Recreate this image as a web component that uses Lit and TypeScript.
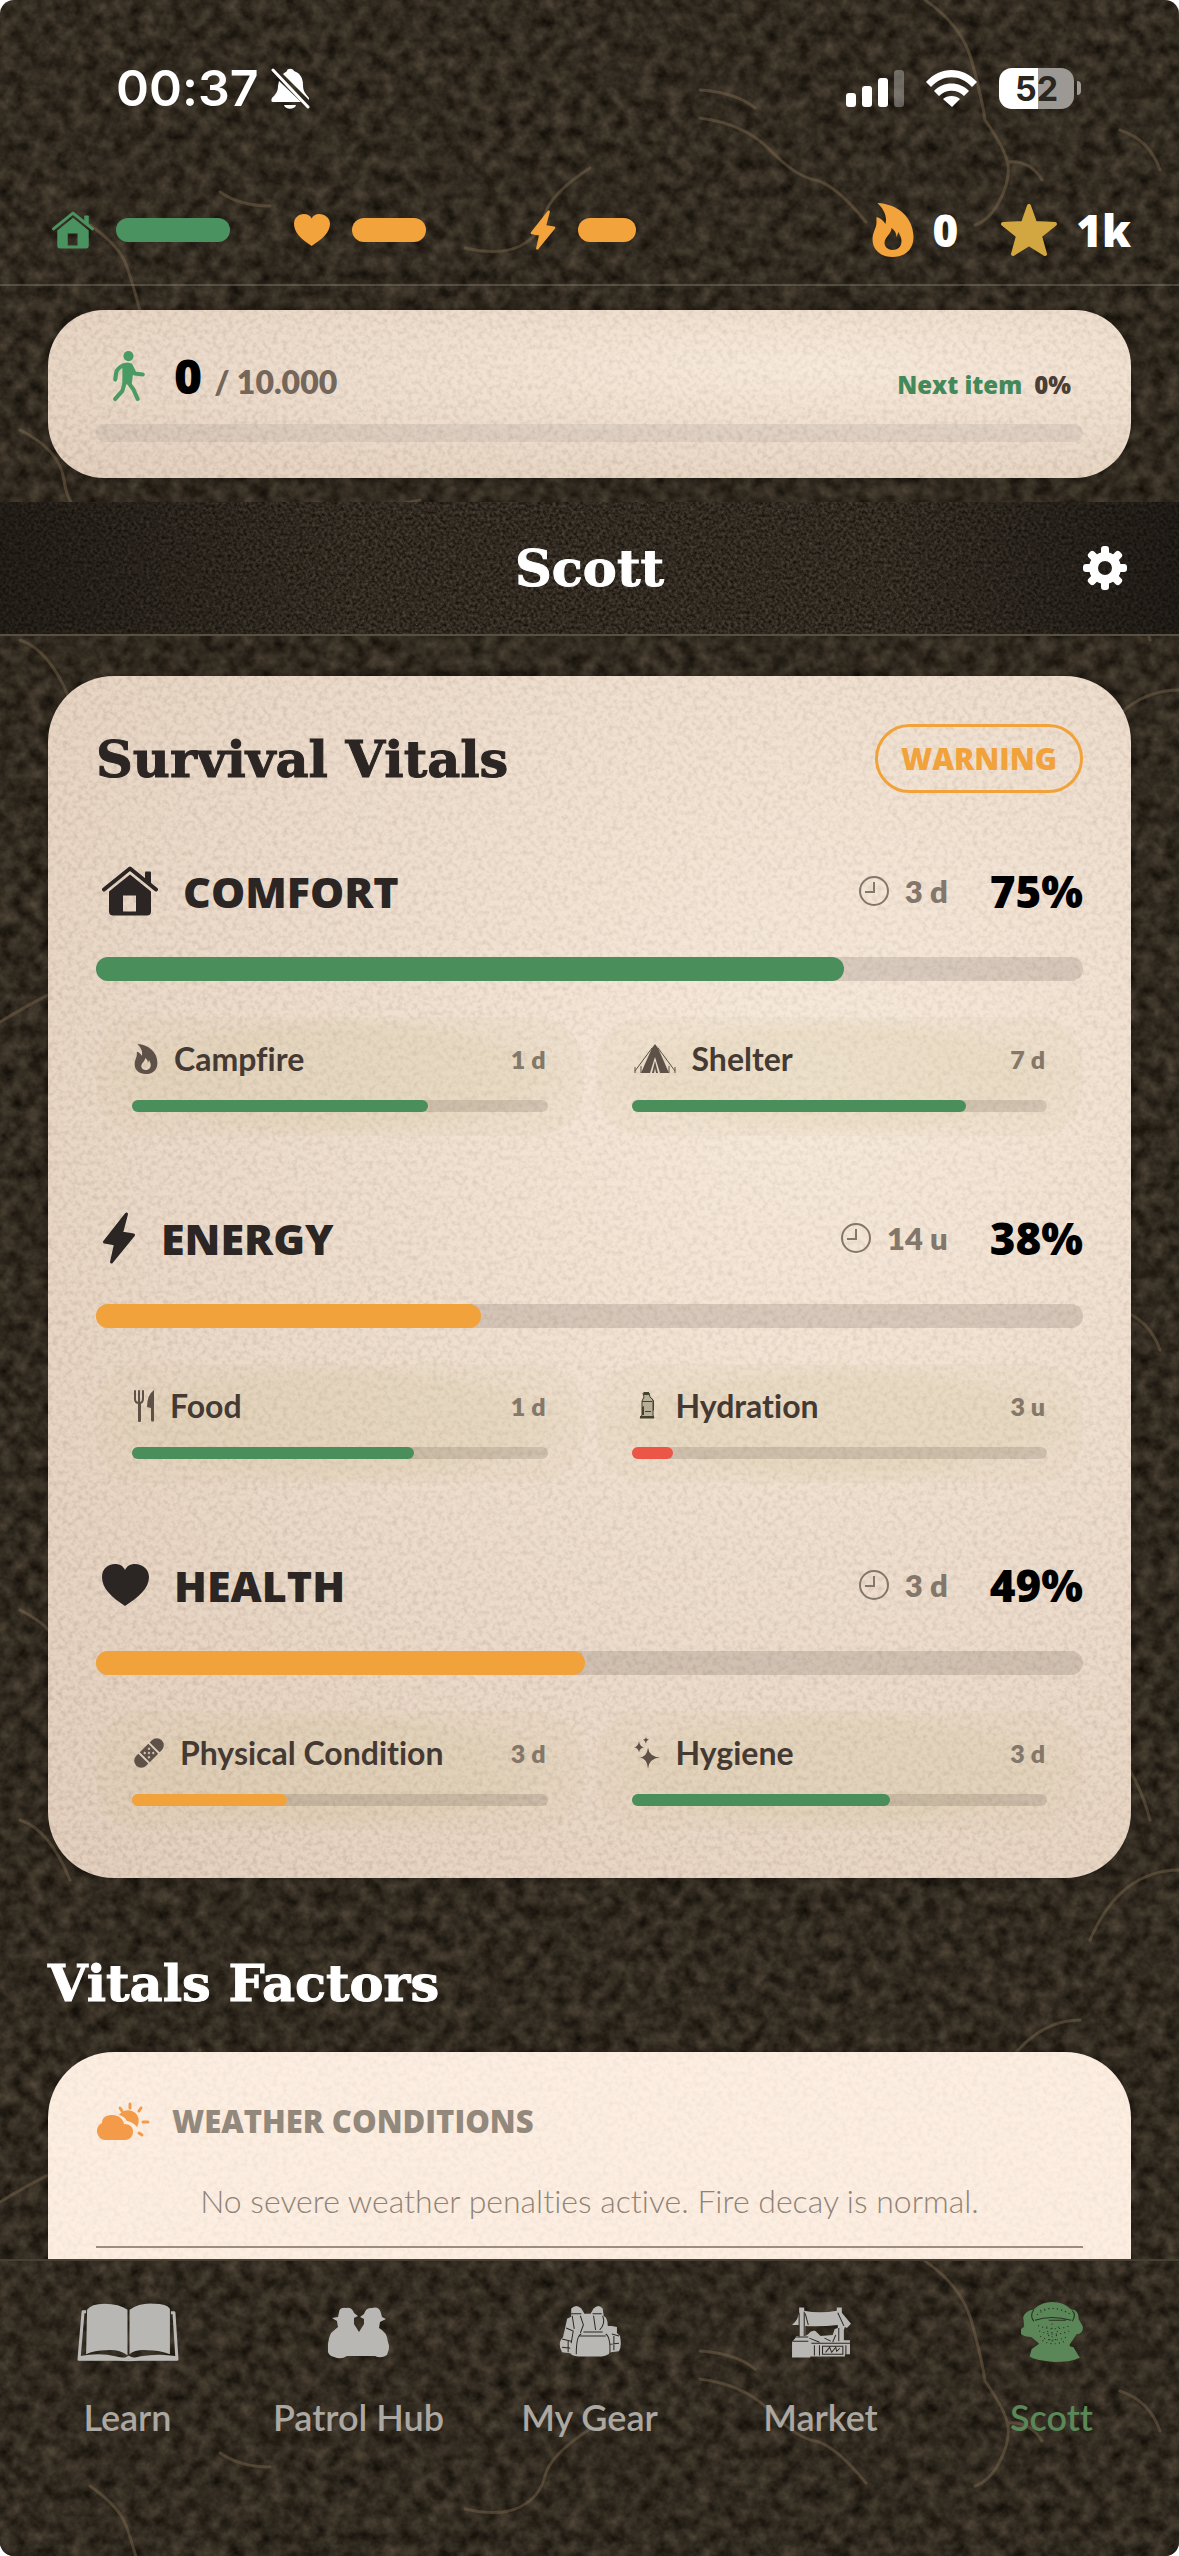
import { css, html, LitElement, svg, SVGTemplateResult, unsafeCSS } from "lit";
import { customElement, property } from "lit/decorators.js";

type Tone = "good" | "warn" | "bad";

interface SubVital {
  icon: string;
  label: string;
  time: string;
  value: number;
  tone: Tone;
}

interface Vital {
  icon: string;
  label: string;
  time: string;
  percent: number;
  fill: number;
  tone: Tone;
  parts: SubVital[];
}

interface IconShape {
  width: number;
  height: number;
  body: SVGTemplateResult;
}

const VITALS: Vital[] = [
  {
    icon: "house", label: "COMFORT", time: "3 d", percent: 75, fill: 75.8, tone: "good",
    parts: [
      { icon: "flame-small", label: "Campfire", time: "1 d", value: 71.3, tone: "good" },
      { icon: "tent", label: "Shelter", time: "7 d", value: 80.4, tone: "good" },
    ],
  },
  {
    icon: "bolt", label: "ENERGY", time: "14 u", percent: 38, fill: 39, tone: "warn",
    parts: [
      { icon: "food", label: "Food", time: "1 d", value: 67.9, tone: "good" },
      { icon: "bottle", label: "Hydration", time: "3 u", value: 10.1, tone: "bad" },
    ],
  },
  {
    icon: "heart", label: "HEALTH", time: "3 d", percent: 49, fill: 49.5, tone: "warn",
    parts: [
      { icon: "bandage", label: "Physical Condition", time: "3 d", value: 37.2, tone: "warn" },
      { icon: "sparkles", label: "Hygiene", time: "3 d", value: 62.1, tone: "good" },
    ],
  },
];

const TABS = [
  { icon: "book", label: "Learn" },
  { icon: "scouts", label: "Patrol Hub" },
  { icon: "backpack", label: "My Gear" },
  { icon: "market", label: "Market" },
  { icon: "face", label: "Scott", active: true },
];

const HOUSE = svg`
  <path d="M2 23 28 2 54 23" fill="none" stroke="currentColor" stroke-width="4" stroke-linecap="round" stroke-linejoin="round"/>
  <path d="M43 6q0-1 1-1h4q1 0 1 1v12l-6-5Z"/>
  <path fill-rule="evenodd" d="M28 8 49 25V45q0 4-4 4H11q-4 0-4-4V25ZM21 29V45H34V29Z"/>`;

const HEART = svg`<path d="M23 42C9 33 0 24 0 13 0 5 6 0 13 0c5 0 8 2 10 6 2-4 5-6 10-6 7 0 14 5 14 13C47 24 37 33 23 42Z"/>`;

const BOLT = svg`<path stroke="currentColor" stroke-width="3" stroke-linejoin="round" d="M24 2 2 30 13 32 9 50 31 23 19 21Z"/>`;

const FLAME = svg`<path fill-rule="evenodd" d="M5 0C26 1 41 15 41 34 41 47 32 54 20 54S0 47 0 36c0-7 4-11 4-17l0-5c4 1 7 4 9 7C15 13 11 6 5 0ZM19 25c0 6-7 9-7 15 0 4 4 7 8 7 5 0 9-3 9-9 0-4-2-6-3-9l-2 5C24 30 22 27 19 25Z"/>`;

const TEETH = [0, 45, 90, 135, 180, 225, 270, 315];

const ICONS: Record<string, IconShape> = {
  house: { width: 56, height: 49, body: HOUSE },
  heart: { width: 47, height: 42, body: HEART },
  bolt: { width: 33, height: 52, body: BOLT },
  flame: { width: 41, height: 54, body: FLAME },
  "flame-small": { width: 41, height: 54, body: FLAME },
  "bell-off": {
    width: 39, height: 42,
    body: svg`
      <path d="M12 7C13 6 15 5 16 4 16 1 22 1 23 4 29 6 32 11 32 18c0 6 2 8 6 13v2Z"/>
      <path d="M8 14 30 35H2c-2 0-2-2-1-4 4-4 6-7 6-12Z"/>
      <path d="M13 38h12c-1 5-11 5-12 0Z"/>
      <path d="M2 3 37 40" stroke="currentColor" stroke-width="3" stroke-linecap="round"/>`,
  },
  signal: {
    width: 58, height: 37,
    body: svg`
      <rect x="0" y="23" width="10" height="14" rx="3"/>
      <rect x="16" y="16" width="10" height="21" rx="3"/>
      <rect x="32" y="8" width="10" height="29" rx="3"/>
      <rect x="48" y="0" width="10" height="37" rx="3" opacity=".3"/>`,
  },
  wifi: {
    width: 51, height: 37,
    body: svg`
      <path d="M0 12C14-4 37-4 51 12l-5 5C34 4 17 4 5 17Z"/>
      <path d="M8 21c9-10 26-10 35 0l-5 5c-7-7-18-7-25 0Z"/>
      <path d="M17 29c4-4 13-4 17 0l-8 8Z"/>`,
  },
  star: {
    width: 56, height: 54,
    body: svg`<path stroke="currentColor" stroke-width="4" stroke-linejoin="round" d="M28 3 34 20 54 21 39 33 44 51 28 41 12 51 17 33 2 21 22 20Z"/>`,
  },
  walk: {
    width: 31, height: 49,
    body: svg`
      <circle cx="15" cy="5" r="5"/>
      <path d="M9 13q4-3 8-1 2 2 3 7l-2 14-9-1Z"/>
      <g fill="none" stroke="currentColor" stroke-width="4" stroke-linecap="round" stroke-linejoin="round">
        <path d="M10 14Q4 17 3 21L2 28"/>
        <path d="M17 14 21 22 29 23"/>
        <path d="M11 32 9 39 2 47"/>
        <path d="M15 31 20 38 24 47"/>
      </g>`,
  },
  gear: {
    width: 44, height: 44,
    body: svg`
      <path fill-rule="evenodd" d="M22 6a16 16 0 1 0 0 32 16 16 0 0 0 0-32Zm0 9a7 7 0 1 1 0 14 7 7 0 0 1 0-14Z"/>
      ${TEETH.map((angle) => svg`<rect x="18" y="0" width="8" height="12" rx="3" transform="rotate(${angle} 22 22)"/>`)}`,
  },
  clock: {
    width: 30, height: 30,
    body: svg`<path fill="none" stroke="currentColor" stroke-width="2" d="M15 1a14 14 0 1 1 0 28 14 14 0 0 1 0-28ZM15 6v10H6"/>`,
  },
  tent: {
    width: 42, height: 30,
    body: svg`
      <path fill-rule="evenodd" d="M21 0 24 4 35 29H26L21 13 16 29H7L18 4Z"/>
      <path d="M21 17 24 29h-2l-1-5-1 5h-2Z"/>
      <path fill="none" stroke="currentColor" stroke-width="1" d="M18 4 1 27M24 4 41 27M1 23v6M41 23v6M7 22v7M35 22v7"/>`,
  },
  food: {
    width: 20, height: 33,
    body: svg`
      <path fill="none" stroke="currentColor" stroke-width="2" stroke-linecap="round" d="M1 2v8q0 4 4 4t4-4V2M5 2v12"/>
      <rect x="4" y="13" width="3" height="20" rx="1"/>
      <path d="M20 1v31q-3 2-3-1V19l-4-1Q13 6 20 1Z"/>`,
  },
  bottle: {
    width: 26, height: 33,
    body: svg`
      <g transform="translate(5 3)">
        <path fill="#b6ae96" stroke="#45412f" stroke-width="1" d="M4 1h6l1 4 3 3v15l1 3H1l2-3V9l2-4Z"/>
        <path fill="#45412f" d="M5 0h5v3H5ZM3 9h10v1H3ZM3 15l2-1v9H3ZM6 19h6v1H6ZM12 5l3 4v9l-1 1V9ZM1 24h14v2H1Z"/>
      </g>`,
  },
  bandage: {
    width: 30, height: 30,
    body: svg`
      <g transform="rotate(-45 15 15)">
        <path d="M7 8v14H4a7 7 0 0 1 0-14ZM23 8v14h3a7 7 0 0 0 0-14Z"/>
        <path fill-rule="evenodd" d="M9 8h12v14H9Zm2 3v2h2v-2Zm6 0v2h2v-2Zm-3 3v2h2v-2Zm-3 3v2h2v-2Zm6 0v2h2v-2Z"/>
      </g>`,
  },
  sparkles: {
    width: 26, height: 32,
    body: svg`
      <path d="M14 11q1 9 12 10-11 1-12 11-1-10-8-11 7-1 8-10Z"/>
      <path d="M5 5q1 5 5 6-4 0-5 5-1-5-5-5 4-1 5-6ZM12 0q0 3 3 3-3 1-3 4-1-3-3-4 3 0 3-3Z"/>`,
  },
  weather: {
    width: 54, height: 39,
    body: svg`
      <path d="M9 38a9 9 0 0 1-3-17C6 15 11 13 16 13c7 0 11 4 12 9 6 0 9 3 9 8s-4 8-8 8Z"/>
      <path d="M23 13a9 9 0 1 1 18 12Q37 20 31 19q-3-5-8-6Z"/>
      <path fill="none" stroke="currentColor" stroke-width="3" stroke-linecap="round" d="M34 2v4M45 6 43 9M24 6l2 3M47 20h5M43 31l3 2"/>`,
  },
  book: {
    width: 101, height: 58,
    body: svg`
      <path d="M10 7Q14 1 27 1q15 0 23 6v45Q42 46 29 47q-12 0-20 4ZM52 7Q62 0 76 1q13 0 16 5v45q-10-4-22-4-12-1-18 4Z"/>
      <path fill="none" stroke="currentColor" stroke-width="3" stroke-linejoin="round" d="M9 9H6L2 56H42q8 0 9-2 3 2 9 2H99L96 10H93"/>
      <path d="M2 53q20-4 36 0l13 3 12-3q18-3 36 0v4H62q-10 2-22 0H2Z"/>`,
  },
  scouts: {
    width: 62, height: 58,
    body: svg`
      <path transform="translate(0 4)" d="M11 5q1-5 7-4 6-1 8 5l4 3-4 2v6l5 8 5-8v-5l-4-2 4-3q2-7 8-6 7-2 9 5l1 4 4 2-6 3-1 6q8 4 9 14 2 5 0 10l-1 3q-6 4-12 1H19q-6 4-13 1-5-1-6-5-1-11 3-19l7-6q-1-5-1-6l-5-3 6-1Z"/>`,
  },
  backpack: {
    width: 61, height: 58,
    body: svg`
      <g transform="translate(0 3)">
        <path d="M12 3q5-5 10 0l3 5h6l3-5q5-5 9 0l1 7q4 2 4 10h4l5 1v6l3 3q2 10-1 15l-8 1q-4 4-9 4H19q-6 0-8-3l-8-1q-5-9 1-15l2-9 2-9 4-2Z"/>
        <g fill="none" stroke="#2d271f" stroke-width="1">
          <path d="M12 8h10M33 8h9M13 10l2 13M21 10l3 9-3 8M34 10l2 14M43 10q3 8-3 14"/>
          <path d="M24 26h19M22 28q-5 1-5 20M46 28q5 3 4 20M20 30h26M7 22l7 3-2 12M3 33l9 2M3 41l8 1M9 34v12M52 28l7 2M50 38l9-1M54 30v14"/>
        </g>
      </g>`,
  },
  market: {
    width: 61, height: 58,
    body: svg`
      <g transform="translate(2 5)">
        <path fill-rule="evenodd" d="M7 0h5v3q15 3 32 0V0h5v5l9 11-4 4-2-1-1 3v10h6v14h-5v2H18v1H0V34l4-5V28h3V17H0Q6 12 7 5ZM13 18v10l3-2q3-4 7-3l5 5 12-1 2-6 3-1v-3q-16 2-32 1Z"/>
        <g fill="none" stroke="#2d271f" stroke-width="1">
          <path d="M7 5v24M12 4v24M13 6l3 11M45 5l6 13M1 33h15M4 29h12M19 35h39M22 37v10M27 37v10M53 37v9M30 38h20v8H30ZM33 44l4-5 2 5 4-5 1 4 3-3M17 30l10 4M32 30l6 3M40 34l3-7M46 20v13"/>
        </g>
      </g>`,
  },
  face: {
    width: 58, height: 56,
    body: svg`
      <path d="M13 6Q20 0 29 0q11 0 18 7 7 0 7 9l4 7q0 7-6 7l-6 9q-2 3 3 3l6 10q-7 4-24 4-17-1-23-5l2-7 7-5-7-6-6-1q-6-2-5-6l4-3-1-9q2-6 10-7Z"/>
      <g fill="none" stroke="#2b3020" stroke-width="1">
        <path d="M13 17q15-5 34 0M26 17h16M12 7q-4 6 0 11M48 8q4 4 0 10"/>
        <path stroke-dasharray="1 3" d="M15 12q14-12 32 0M18 8q11-5 26 2M16 22q14 6 30 0M17 27q14 6 28 0M18 32q12 7 26 0M20 36q10 6 22 0M29 20v20M24 23l3 13M35 23l-3 13"/>
      </g>`,
  },
};

// Repeating textures, each a small SVG filtered through noise.
const texture = (size: number, frequency: number, matrix: string, veins = "") =>
  unsafeCSS(
    `url("data:image/svg+xml,${encodeURIComponent(
      `<svg xmlns="http://www.w3.org/2000/svg" width="${size}" height="${size}">
        <filter id="n" x="0" y="0" width="100%" height="100%" color-interpolation-filters="sRGB">
          <feTurbulence type="fractalNoise" baseFrequency="${frequency}" numOctaves="4" seed="7" stitchTiles="stitch"/>
          <feColorMatrix values="${matrix}"/>
        </filter>
        <rect width="100%" height="100%" filter="url(#n)"/>
        <g fill="none" stroke="rgb(132,110,82)" stroke-width="3" stroke-opacity=".42" stroke-linecap="round" stroke-linejoin="round">${veins}</g>
      </svg>`
    ).replace(/'/g, "%27")}")`
  );

const ROOTS = `
  <path d="M90 225Q118 245 125 262T145 330M700 118Q745 124 770 150T815 180 866 222M925 0Q962 25 972 62T985 120Q1006 150 1008 165T1000 200 975 225M1008 162Q1030 160 1042 180M465 248Q500 256 520 246T545 215 590 168"/>
  <path d="M220 192Q240 206 270 206M700 90Q735 92 755 108M20 430Q60 450 64 480T90 520M1120 130Q1150 140 1160 170M900 420Q940 400 960 420T1020 422M1090 760Q1120 690 1180 690"/>
  <path d="M0 1022Q60 985 110 970T200 870M720 950Q780 935 820 965T880 1020M900 930Q980 920 1010 880T1080 840M228 1040Q250 1060 262 1090"/>
  <path d="M20 640Q50 650 70 700M1110 560Q1140 600 1150 640M560 1100Q620 1140 700 1130M330 560Q360 510 420 500"/>`;

const SOIL = texture(1180, 0.07, "0.3 0 0 0 0.045 0.27 0 0 0 0.032 0.23 0 0 0 0.012 0 0 0 0 1", ROOTS);
const FINE_SOIL = texture(900, 0.32, "0.32 0 0 0 0.03 0.29 0 0 0 0.018 0.24 0 0 0 0.01 0 0 0 0 1");
const PAPER = texture(700, 0.2, "0 0 0 0 0.36 0 0 0 0 0.27 0 0 0 0 0.2 0.5 0 0 0 -0.2");

@customElement("app-icon")
export class AppIcon extends LitElement {
  @property()
  name = "";

  static styles = css`
    :host {
      display: inline-flex;
      flex: none;
    }

    svg {
      display: block;
      width: 100%;
      height: 100%;
      fill: currentColor;
    }
  `;

  render() {
    const icon = ICONS[this.name];
    if (!icon) return html``;
    return html`<svg viewBox="0 0 ${icon.width} ${icon.height}" aria-hidden="true">${icon.body}</svg>`;
  }
}

@customElement("progress-track")
export class ProgressTrack extends LitElement {
  @property({ type: Number })
  value = 0;

  @property()
  tone: Tone = "good";

  @property()
  label = "";

  static styles = css`
    :host {
      display: block;
      height: 24px;
      border-radius: 12px;
      background: rgba(70, 55, 50, 0.16);
    }

    .track,
    .fill {
      height: 100%;
      border-radius: 12px;
    }

    .fill {
      background: #4a8e5c;
    }

    .warn {
      background: #f1a23a;
    }

    .bad {
      background: #ec5647;
    }
  `;

  render() {
    return html`
      <div
        class="track"
        role="progressbar"
        aria-label=${this.label}
        aria-valuenow=${this.value}
      >
        <div class="fill ${this.tone}" style="width: ${this.value}%"></div>
      </div>
    `;
  }
}

@customElement("app-root")
export class AppRoot extends LitElement {
  static styles = css`
    :host {
      display: block;
      --heavy: "Open Sans", "Noto Sans", sans-serif;
      background: #fff;
      color: #2b2523;
      font-family: Lato, "Open Sans", sans-serif;
      font-variant-ligatures: none;
    }

    .screen {
      display: flex;
      flex-direction: column;
      height: 100vh;
      overflow: hidden;
      border-radius: 14px;
      background: #30291f ${SOIL};
    }

    h1,
    h2,
    h3,
    p {
      margin: 0;
    }

    .status {
      display: flex;
      align-items: center;
      justify-content: space-between;
      height: 176px;
      padding: 0 98px 0 116px;
      box-sizing: border-box;
      color: #fff;
      font-family: Inter, sans-serif;
    }

    .status-side {
      display: flex;
      align-items: center;
      gap: 22px;
    }

    .clock {
      display: flex;
      align-items: center;
      gap: 12px;
      font-size: 50px;
      font-weight: 600;
    }

    .bell {
      width: 39px;
      height: 42px;
    }

    .signal {
      width: 58px;
      height: 37px;
    }

    .wifi {
      width: 51px;
      height: 37px;
    }

    .battery {
      display: flex;
      align-items: center;
      gap: 3px;
    }

    .battery-body {
      width: 75px;
      height: 41px;
      border-radius: 13px;
      background: linear-gradient(90deg, #fff 52%, #9c9994 52%);
      color: #2b2620;
      font-size: 34px;
      font-weight: 700;
      line-height: 41px;
      text-align: center;
    }

    .battery-tip {
      width: 4px;
      height: 14px;
      border-radius: 0 4px 4px 0;
      background: #9c9994;
    }

    .meters {
      display: flex;
      align-items: center;
      justify-content: space-between;
      height: 110px;
      padding: 0 48px 0 52px;
      box-sizing: border-box;
      border-bottom: 2px solid rgba(150, 145, 130, 0.35);
      color: #fff;
      font-family: var(--heavy);
      font-size: 44px;
      font-weight: 800;
      line-height: 60px;
    }

    .meter-list {
      display: grid;
      grid-template-columns: 242px 236px 108px;
    }

    .meter,
    .counter {
      display: flex;
      align-items: center;
    }

    .meter {
      gap: 22px;
    }

    .meter-icon {
      width: 42px;
      height: 38px;
    }

    .meter.heart .meter-icon {
      width: 36px;
    }

    .meter.bolt .meter-icon {
      width: 26px;
      height: 40px;
    }

    .meter-bar {
      height: 24px;
      border-radius: 12px;
      background: currentColor;
    }

    .good {
      color: #4a925f;
    }

    .warn {
      color: #f3a33c;
    }

    .counters {
      display: flex;
      gap: 42px;
    }

    .counter {
      gap: 18px;
    }

    .flame {
      width: 42px;
      height: 54px;
      color: #f3a33c;
    }

    .star {
      width: 58px;
      height: 54px;
      color: #d2a641;
    }

    .steps-area {
      padding: 24px 48px;
    }

    .card {
      border-radius: 66px;
      background:
        radial-gradient(ellipse at 70% 34%, rgba(255, 245, 232, 0.5), rgba(200, 174, 152, 0.3) 95%),
        ${PAPER},
        #f0dfcf;
      box-shadow: 0 0 10px rgba(0, 0, 0, 0.35);
    }

    .steps {
      padding: 36px 48px;
      border-radius: 56px;
    }

    .steps-row {
      display: flex;
      align-items: baseline;
      justify-content: space-between;
      height: 60px;
      padding: 0 12px;
      margin-bottom: 18px;
    }

    .steps-count,
    .steps-next {
      display: flex;
      align-items: baseline;
      gap: 12px;
    }

    .steps-left {
      display: flex;
      align-items: center;
      gap: 24px;
    }

    .steps-count {
      align-self: baseline;
    }

    .walk {
      width: 42px;
      height: 50px;
      color: #4a9a63;
    }

    .steps-value {
      color: #000;
      font-family: var(--heavy);
      font-size: 48px;
      font-weight: 800;
      line-height: 60px;
    }

    .steps-goal {
      color: #74665a;
      font-size: 32px;
      font-weight: 800;
    }

    .steps-next {
      color: #4a3e36;
      font-family: var(--heavy);
      font-size: 24px;
      font-weight: 800;
    }

    .next-label {
      color: #43895a;
    }

    .steps-track {
      height: 18px;
      border-radius: 9px;
      background: rgba(90, 90, 100, 0.1);
    }

    .title-bar {
      display: grid;
      grid-template-columns: 1fr auto 1fr;
      align-items: center;
      height: 134px;
      padding: 0 52px;
      box-sizing: border-box;
      border-bottom: 2px solid #55503f;
      background: linear-gradient(90deg, rgba(16, 13, 10, 0.5), transparent 30%, transparent 75%, rgba(14, 12, 10, 0.55)), ${FINE_SOIL};
      color: #fff;
    }

    .title,
    .heading {
      font-family: "DejaVu Serif", serif;
      font-size: 51px;
      font-weight: 700;
      line-height: 66px;
      -webkit-text-stroke: 1px currentColor;
    }

    .title {
      grid-column: 2;
    }

    .settings {
      justify-self: end;
      width: 44px;
      height: 44px;
      padding: 0;
      border: 0;
      background: none;
      color: #fff;
    }

    .gear {
      width: 44px;
      height: 44px;
    }

    .content {
      flex: 1;
      min-height: 0;
      overflow: auto;
      scrollbar-width: none;
      padding: 40px 48px 0;
    }

    .vitals {
      padding: 48px;
    }

    .card-head {
      display: flex;
      align-items: center;
      justify-content: space-between;
      height: 69px;
      margin-bottom: 68px;
    }

    .badge {
      padding: 0 23px;
      border: 3px solid #f1a23a;
      border-radius: 35px;
      color: #f1a23a;
      font-family: var(--heavy);
      font-size: 30px;
      font-weight: 800;
      line-height: 63px;
    }

    .vital + .vital {
      margin-top: 72px;
    }

    .vital-head {
      display: flex;
      align-items: center;
      height: 60px;
      padding-left: 6px;
      margin-bottom: 36px;
    }

    .vital-icon {
      width: 56px;
      height: 50px;
      margin-right: 25px;
    }

    .vital-icon.bolt {
      width: 34px;
      height: 52px;
    }

    .vital-icon.heart {
      width: 47px;
      height: 42px;
    }

    .vital-name {
      flex: 1;
      font-family: var(--heavy);
      font-size: 43px;
      font-weight: 800;
    }

    .vital-time {
      display: flex;
      align-items: center;
      gap: 16px;
      margin-right: 42px;
      color: #83766b;
      font-size: 31px;
      font-weight: 800;
    }

    .time-icon {
      width: 30px;
      height: 30px;
    }

    .vital-percent {
      color: #000;
      font-family: var(--heavy);
      font-size: 44px;
      font-weight: 800;
    }

    .parts {
      display: grid;
      grid-template-columns: 1fr 1fr;
      gap: 12px;
      margin-top: 36px;
    }

    .part {
      padding: 24px 36px;
      border-radius: 48px;
      background: radial-gradient(closest-side, rgba(200, 188, 140, 0.22) 75%, rgba(200, 188, 140, 0.1));
    }

    .part-head {
      display: flex;
      align-items: center;
      height: 35px;
      margin-bottom: 24px;
      padding: 0 2px;
      color: #443a33;
      font-size: 32px;
      font-weight: 700;
    }

    .part-icon {
      height: 30px;
      margin-right: 16px;
      color: #5d5148;
    }

    .part-icon.flame-small {
      width: 24px;
    }

    .part-icon.tent {
      width: 42px;
    }

    .part-icon.food {
      width: 20px;
      height: 33px;
    }

    .part-icon.bottle,
    .part-icon.sparkles {
      width: 26px;
      height: 33px;
    }

    .part-icon.bandage {
      width: 30px;
    }

    .part-name {
      flex: 1;
    }

    .part-time {
      color: #84786b;
      font-size: 25px;
      font-weight: 800;
    }

    .part-track {
      height: 12px;
      border-radius: 6px;
    }

    .section-title {
      margin: 72px 0 36px;
      color: #fff;
    }

    .factors {
      padding: 48px 48px 120px;
      background:
        linear-gradient(rgba(255, 241, 228, 0.72), rgba(255, 241, 228, 0.72)),
        ${PAPER},
        #f5e6d8;
    }

    .factor-head {
      display: flex;
      align-items: center;
      gap: 22px;
      height: 42px;
      color: #93887c;
      font-family: var(--heavy);
      font-size: 31px;
      font-weight: 800;
    }

    .weather {
      width: 54px;
      height: 39px;
      color: #f39b49;
    }

    .factor-note {
      padding: 38px 0 24px;
      border-bottom: 2px solid #9c8d80;
      color: #8f8377;
      font-size: 32px;
      font-weight: 300;
      line-height: 42px;
      text-align: center;
    }

    .tabs {
      display: grid;
      grid-template-columns: repeat(5, 1fr);
      padding: 41px 12px 114px;
      border-top: 2px solid #454033;
      background: ${SOIL};
    }

    .tab {
      display: flex;
      flex-direction: column;
      align-items: center;
      gap: 30px;
      color: #aba7a1;
      font-size: 36px;
      font-weight: 600;
      line-height: 50px;
      text-decoration: none;
    }

    .tab-icon {
      width: 62px;
      height: 60px;
      color: #b9b7b3;
    }

    .tab-icon.book {
      width: 102px;
    }

    .tab.active,
    .tab.active .tab-icon {
      color: #5a8658;
    }
  `;

  render() {
    return html`
      <div class="screen">
        ${this.renderStatus()} ${this.renderMeters()} ${this.renderSteps()}
        <header class="title-bar">
          <h1 class="title">Scott</h1>
          <button class="settings" aria-label="Settings">
            <app-icon class="gear" name="gear"></app-icon>
          </button>
        </header>
        <main class="content">
          <section class="card vitals">
            <div class="card-head">
              <h2 class="heading">Survival Vitals</h2>
              <span class="badge">WARNING</span>
            </div>
            ${VITALS.map((vital) => this.renderVital(vital))}
          </section>
          <h2 class="heading section-title">Vitals Factors</h2>
          <section class="card factors">
            <h3 class="factor-head">
              <app-icon class="weather" name="weather"></app-icon>
              WEATHER CONDITIONS
            </h3>
            <p class="factor-note">No severe weather penalties active. Fire decay is normal.</p>
          </section>
        </main>
        ${this.renderTabs()}
      </div>
    `;
  }

  renderStatus() {
    return html`
      <div class="status">
        <div class="clock">
          <span>00:37</span>
          <app-icon class="bell" name="bell-off"></app-icon>
        </div>
        <div class="status-side">
          <app-icon class="signal" name="signal"></app-icon>
          <app-icon class="wifi" name="wifi"></app-icon>
          <div class="battery">
            <div class="battery-body">52</div>
            <div class="battery-tip"></div>
          </div>
        </div>
      </div>
    `;
  }

  renderMeters() {
    const meters = [
      { icon: "house", tone: "good", width: 114 },
      { icon: "heart", tone: "warn", width: 74 },
      { icon: "bolt", tone: "warn", width: 58 },
    ];
    return html`
      <div class="meters">
        <div class="meter-list">
          ${meters.map(
            (meter) => html`
              <div class="meter ${meter.icon} ${meter.tone}">
                <app-icon class="meter-icon" name=${meter.icon}></app-icon>
                <div class="meter-bar" style="width: ${meter.width}px"></div>
              </div>
            `
          )}
        </div>
        <div class="counters">
          <div class="counter"><app-icon class="flame" name="flame"></app-icon>0</div>
          <div class="counter"><app-icon class="star" name="star"></app-icon>1k</div>
        </div>
      </div>
    `;
  }

  renderSteps() {
    return html`
      <div class="steps-area">
        <section class="card steps">
          <div class="steps-row">
            <div class="steps-left">
              <app-icon class="walk" name="walk"></app-icon>
              <div class="steps-count">
                <span class="steps-value">0</span>
                <span class="steps-goal">/ 10.000</span>
              </div>
            </div>
            <div class="steps-next">
              <span class="next-label">Next item</span>
              <span>0%</span>
            </div>
          </div>
          <progress-track class="steps-track" label="Steps" .value=${0}></progress-track>
        </section>
      </div>
    `;
  }

  renderVital(vital: Vital) {
    return html`
      <div class="vital">
        <div class="vital-head">
          <app-icon class="vital-icon ${vital.icon}" name=${vital.icon}></app-icon>
          <h3 class="vital-name">${vital.label}</h3>
          <span class="vital-time">
            <app-icon class="time-icon" name="clock"></app-icon>${vital.time}
          </span>
          <span class="vital-percent">${vital.percent}%</span>
        </div>
        <progress-track .value=${vital.fill} tone=${vital.tone} label=${vital.label}></progress-track>
        <div class="parts">${vital.parts.map((part) => this.renderPart(part))}</div>
      </div>
    `;
  }

  renderPart(part: SubVital) {
    return html`
      <div class="part">
        <div class="part-head">
          <app-icon class="part-icon ${part.icon}" name=${part.icon}></app-icon>
          <span class="part-name">${part.label}</span>
          <span class="part-time">${part.time}</span>
        </div>
        <progress-track class="part-track" .value=${part.value} tone=${part.tone} label=${part.label}></progress-track>
      </div>
    `;
  }

  renderTabs() {
    return html`
      <nav class="tabs">
        ${TABS.map(
          (tab) => html`
            <a class="tab ${tab.active ? "active" : ""}" href="#">
              <app-icon class="tab-icon ${tab.icon}" name=${tab.icon}></app-icon>
              ${tab.label}
            </a>
          `
        )}
      </nav>
    `;
  }
}

declare global {
  interface HTMLElementTagNameMap {
    "app-icon": AppIcon;
    "progress-track": ProgressTrack;
    "app-root": AppRoot;
  }
}
